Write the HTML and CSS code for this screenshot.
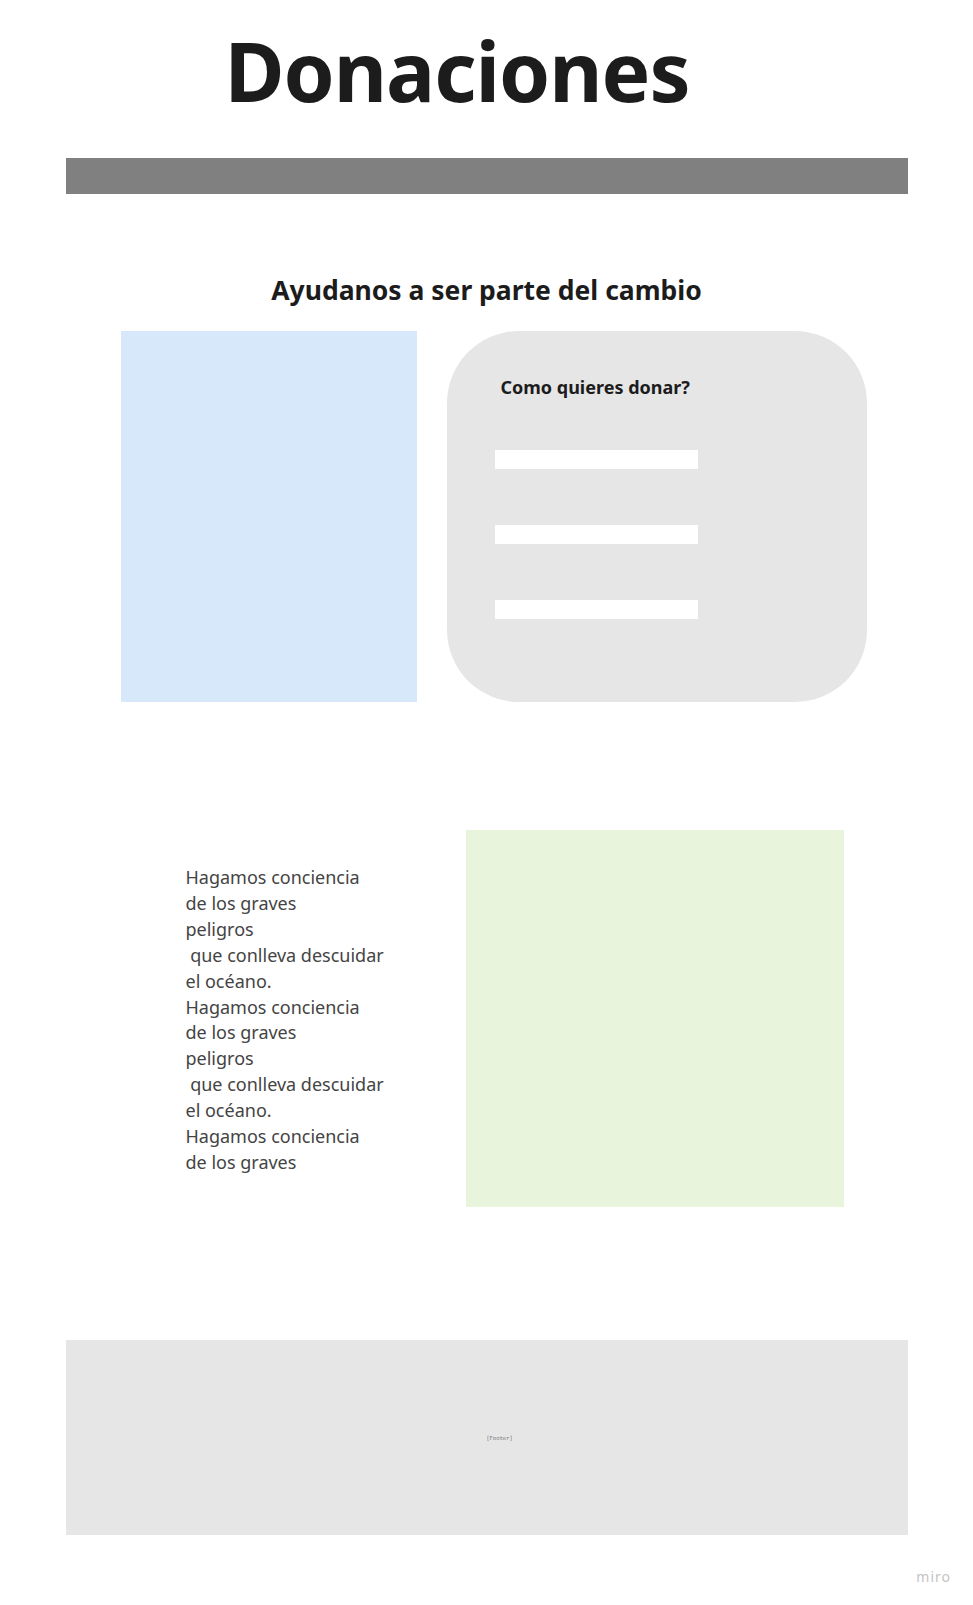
FILE: index.html
```html
<!DOCTYPE html>
<html lang="es">
<head>
    <meta charset="UTF-8">
    <meta name="viewport" content="width=device-width, initial-scale=1.0">
    <title>Donaciones</title>
    <link rel="stylesheet" href="styles.css">
</head>
<body>
    <div class="page">
        <header class="header">
            <h1 class="title">Donaciones</h1>
        </header>
        <div class="navbar"></div>

        <h2 class="subtitle">Ayudanos a ser parte del cambio</h2>

        <div class="donate-row">
            <div class="image-box blue"></div>
            <div class="donate-card">
                <h3>Como quieres donar?</h3>
                <div class="option"></div>
                <div class="option"></div>
                <div class="option"></div>
            </div>
        </div>

        <div class="info-row">
            <p class="info-text">Hagamos conciencia
de los graves
peligros
 que conlleva descuidar
el océano.
Hagamos conciencia
de los graves
peligros
 que conlleva descuidar
el océano.
Hagamos conciencia
de los graves</p>
            <div class="image-box green"></div>
        </div>

        <footer class="footer">[Footer]</footer>
    </div>
    <div class="watermark">miro</div>
</body>
</html>
```

FILE: styles.css
```css
body {
    margin: 0;
    padding: 0;
    background-color: #ffffff;
    color: #1c1c1c;
    font-family: "Noto Sans", "Open Sans", sans-serif;
}
.page {
    width: 842px;
    margin: 0 auto;
}
.header {
    height: 158px;
    padding-left: 159px;
    box-sizing: border-box;
}
.title {
    margin: 0;
    padding-top: 29px;
    font-size: 82px;
    line-height: 1;
    font-weight: 700;
    letter-spacing: -1px;
    color: #1c1c1c;
}
.navbar {
    height: 36px;
    background-color: #808080;
}
.subtitle {
    margin: 76px 0 0;
    font-size: 26.5px;
    line-height: 40px;
    font-weight: 700;
    text-align: center;
    color: #1c1c1c;
}
.donate-row {
    display: flex;
    gap: 30px;
    margin-top: 21px;
    padding-left: 55px;
}
.image-box.blue {
    width: 296px;
    height: 371px;
    background-color: #d6e8f9;
}
.donate-card {
    width: 420px;
    height: 371px;
    box-sizing: border-box;
    padding: 40px 0 0 48px;
    border-radius: 72px;
    background-color: #e6e6e6;
}
.donate-card h3 {
    margin: 0 0 47px 6px;
    font-size: 18px;
    line-height: 32px;
    font-weight: 700;
}
.option {
    width: 203px;
    height: 19px;
    margin-bottom: 56px;
    background-color: #ffffff;
}
.info-row {
    display: flex;
    margin-top: 128px;
}
.info-text {
    width: 280px;
    margin: 35px 0 0 120px;
    white-space: pre;
    font-size: 18px;
    line-height: 25.9px;
    color: #444444;
}
.image-box.green {
    width: 378px;
    height: 377px;
    background-color: #e8f5dc;
}
.footer {
    height: 195px;
    margin-top: 133px;
    padding-left: 26px;
    display: flex;
    align-items: center;
    justify-content: center;
    background-color: #e6e6e6;
    font-family: "DejaVu Sans Mono", monospace;
    font-size: 5.5px;
    color: #777;
}
.watermark {
    margin-top: 32px;
    padding-right: 22px;
    text-align: right;
    font-size: 14px;
    color: #c4c4c4;
    letter-spacing: 1px;
}
```
